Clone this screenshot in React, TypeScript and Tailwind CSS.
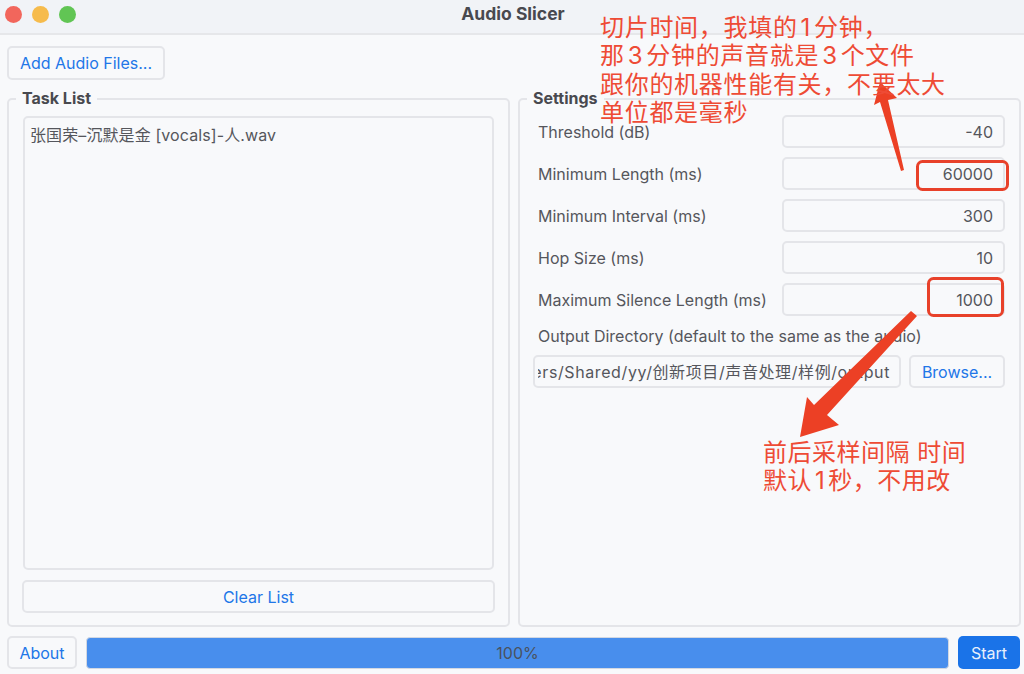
const settings = [
  { label: "Threshold (dB)", value: "-40" },
  { label: "Minimum Length (ms)", value: "60000" },
  { label: "Minimum Interval (ms)", value: "300" },
  { label: "Hop Size (ms)", value: "10" },
  { label: "Maximum Silence Length (ms)", value: "1000" },
];

const Button = ({ children, className }: { children: string; className: string }) => (
  <button className={`flex items-center justify-center rounded-[5px] border-2 border-[#e4e5e9] text-[16px] text-[#2176e8] ${className}`}>
    {children}
  </button>
);

const GroupBox = ({ title, children, className }: { title: string; children: React.ReactNode; className: string }) => (
  <div className={`relative rounded-[5px] border-2 border-[#e4e5e9] ${className}`}>
    <span className="absolute left-[7px] top-[-12px] bg-[#f8f9fb] px-[6px] text-[16px] leading-[20px] font-bold text-[#48494f]">
      {title}
    </span>
    {children}
  </div>
);

export default function App() {
  return (
    <div className="relative flex h-[674px] w-[1024px] flex-col overflow-hidden bg-[#f8f9fb] font-['Inter','Noto_Sans_CJK_SC',sans-serif] text-[16px] text-[#55565c]">
      {/* title bar */}
      <div className="relative flex h-[35px] items-center justify-center border-b-2 border-[#e6e7ea] bg-[#f1f3f7]">
        <div className="absolute left-[5px] top-[6px] flex gap-[10px]">
          <span className="h-[17px] w-[17px] rounded-full bg-[#f2665c]" />
          <span className="h-[17px] w-[17px] rounded-full bg-[#f6bb4c]" />
          <span className="h-[17px] w-[17px] rounded-full bg-[#61c554]" />
        </div>
        <span className="ml-[2px] mb-[5px] text-[17.5px] font-bold text-[#48494f]">Audio Slicer</span>
      </div>

      <div className="flex flex-1 flex-col pt-[11px] pr-[3px] pl-[7px]">
        <Button className="h-[34px] w-[158px]">Add Audio Files...</Button>

        <div className="mt-[18px] flex h-[529px] gap-[8px]">
          <GroupBox title="Task List" className="flex w-[503px] flex-col px-[14px] pt-[16px]">
            <div className="h-[454px] rounded-[5px] border-2 border-[#e4e5e9] px-[5px] py-[6px] leading-[22px] tracking-[0.1px]">
              张国荣–沉默是金 [vocals]-人.wav
            </div>
            <Button className="-mx-px mt-[10px] h-[33px]">Clear List</Button>
          </GroupBox>

          <GroupBox title="Settings" className="flex w-[503px] flex-col pt-[15px] pr-[14px] pl-[13px]">
            <div className="flex flex-col gap-[9px]">
              {settings.map((s) => (
                <div key={s.label} className="flex h-[33px] items-center">
                  <span className="w-[249px] pl-[5px]">{s.label}</span>
                  <div className="flex h-full flex-1 items-center justify-end rounded-[5px] border-2 border-[#e4e5e9] pr-[10px]">
                    {s.value}
                  </div>
                </div>
              ))}
            </div>
            <div className="mt-[10px] pl-[5px] leading-[20px]">Output Directory (default to the same as the audio)</div>
            <div className="mt-[9px] flex h-[33px] gap-[8px]">
              <div className="flex w-[368px] items-center justify-end rounded-[5px] border-2 border-[#e4e5e9] pr-[9px] pl-[3px]">
                <span className="overflow-hidden tracking-[0.6px] whitespace-nowrap [direction:rtl]">
                  <span className="[direction:ltr] [unicode-bidi:bidi-override]">/Users/Shared/yy/创新项目/声音处理/样例/output</span>
                </span>
              </div>
              <Button className="flex-1">Browse...</Button>
            </div>
          </GroupBox>
        </div>

        <div className="mt-[9px] flex h-[33px] gap-[9px]">
          <Button className="w-[70px]">About</Button>
          <div className="mt-px flex w-[863px] items-center justify-center rounded-[4px] border border-[#d3d8e2] bg-[#488eed] text-[#4a5260]">
            100%
          </div>
          <button className="flex h-[33px] w-[62px] items-center justify-center rounded-[5px] bg-[#1a73e8] text-[#e8f0fc]">
            Start
          </button>
        </div>
      </div>

      {/* red annotations drawn on top of the screenshot */}
      <svg className="absolute top-0 left-0" width="1024" height="674" viewBox="0 0 1024 674">
        <rect x="917.5" y="161.5" width="90" height="28" rx="5" fill="none" stroke="#e8412a" strokeWidth="3" />
        <rect x="928.5" y="278.5" width="74" height="37" rx="5" fill="none" stroke="#e8412a" strokeWidth="3" />
        <polygon points="880,82 897,98 888,100 904,170 901,171 880,102 874,105" fill="#ec4025" />
        <polygon points="800,437 807,397 814,405 911,311 917,316 827,415 839,425" fill="#ec4025" />
      </svg>
      <div className="absolute top-[14px] left-[600px] text-[24px] leading-[28.4px] tracking-[0.7px] whitespace-nowrap text-[#ee4b35]">
        <div>切片时间，我填的<span className="mx-[3px]">1</span>分钟，</div>
        <div>那<span className="mx-[3px]">3</span>分钟的声音就是<span className="mx-[3px]">3</span>个文件</div>
        <div>跟你的机器性能有关，不要太大</div>
        <div>单位都是毫秒</div>
      </div>
      <div className="absolute top-[439px] left-[763px] text-[24px] leading-[28.4px] tracking-[0.5px] whitespace-nowrap text-[#ee4b35]">
        <div>前后采样间隔 时间</div>
        <div>默认<span className="mx-[3px]">1</span>秒，不用改</div>
      </div>
    </div>
  );
}
